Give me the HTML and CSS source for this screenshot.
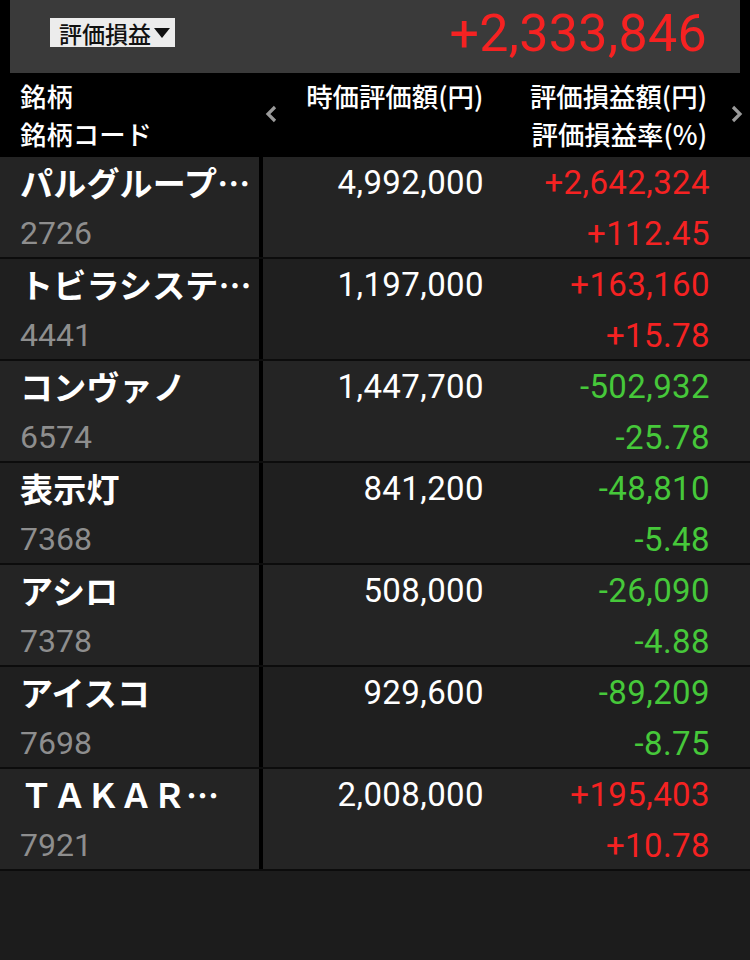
FILE: index.html
```html
<!DOCTYPE html>
<html lang="ja">
<head>
    <meta charset="UTF-8">
    <meta name="viewport" content="width=device-width, initial-scale=1.0">
    <title>評価損益</title>
    <link rel="stylesheet" href="styles.css">
</head>
<body>
    <div class="summary">
        <div class="picker">評価損益<span class="caret"></span></div>
        <div class="total up">+2,333,846</div>
    </div>

    <div class="head">
        <div class="col-name">
            <div>銘柄</div>
            <div>銘柄コード</div>
        </div>
        <div class="arrow">
            <svg width="14" height="20" viewBox="0 0 14 20"><path d="M11 3 L4 10 L11 17" fill="none" stroke="#9a9a9a" stroke-width="3.2"/></svg>
        </div>
        <div class="col-value">
            <div>時価評価額(円)</div>
        </div>
        <div class="col-pl">
            <div>評価損益額(円)</div>
            <div>評価損益率(%)</div>
        </div>
        <div class="arrow arrow-right">
            <svg width="14" height="20" viewBox="0 0 14 20"><path d="M3 3 L10 10 L3 17" fill="none" stroke="#9a9a9a" stroke-width="3.2"/></svg>
        </div>
    </div>

    <div class="rows">
        <div class="row">
            <div class="col-name"><div class="name">パルグループ…</div><div class="code">2726</div></div>
            <div class="col-value"><div>4,992,000</div></div>
            <div class="col-pl up"><div>+2,642,324</div><div>+112.45</div></div>
        </div>
        <div class="row">
            <div class="col-name"><div class="name">トビラシステ…</div><div class="code">4441</div></div>
            <div class="col-value"><div>1,197,000</div></div>
            <div class="col-pl up"><div>+163,160</div><div>+15.78</div></div>
        </div>
        <div class="row">
            <div class="col-name"><div class="name">コンヴァノ</div><div class="code">6574</div></div>
            <div class="col-value"><div>1,447,700</div></div>
            <div class="col-pl down"><div>-502,932</div><div>-25.78</div></div>
        </div>
        <div class="row">
            <div class="col-name"><div class="name">表示灯</div><div class="code">7368</div></div>
            <div class="col-value"><div>841,200</div></div>
            <div class="col-pl down"><div>-48,810</div><div>-5.48</div></div>
        </div>
        <div class="row">
            <div class="col-name"><div class="name">アシロ</div><div class="code">7378</div></div>
            <div class="col-value"><div>508,000</div></div>
            <div class="col-pl down"><div>-26,090</div><div>-4.88</div></div>
        </div>
        <div class="row">
            <div class="col-name"><div class="name">アイスコ</div><div class="code">7698</div></div>
            <div class="col-value"><div>929,600</div></div>
            <div class="col-pl down"><div>-89,209</div><div>-8.75</div></div>
        </div>
        <div class="row">
            <div class="col-name"><div class="name">ＴＡＫＡＲ…</div><div class="code">7921</div></div>
            <div class="col-value"><div>2,008,000</div></div>
            <div class="col-pl up"><div>+195,403</div><div>+10.78</div></div>
        </div>
    </div>
</body>
</html>
```

FILE: styles.css
```css
body {
    margin: 0;
    height: 960px;
    background-color: #1c1c1c;
    color: #fff;
    font-family: Roboto, "Noto Sans CJK JP", sans-serif;
    overflow: hidden;
}
.up {
    color: #f52222;
}
.down {
    color: #46c83a;
}

/* summary bar */
.summary {
    display: flex;
    align-items: flex-start;
    justify-content: space-between;
    height: 73px;
    box-sizing: border-box;
    border-left: 10px solid #000;
    border-right: 10px solid #000;
    background: #3a3a3a;
    padding: 18px 33px 0 40px;
}
.picker {
    display: flex;
    align-items: center;
    height: 29px;
    padding: 0 5px 0 9px;
    background: #ececec;
    color: #111;
    font-family: "Noto Sans CJK JP", sans-serif;
    font-size: 23px;
    font-weight: 500;
}
.caret {
    width: 0;
    height: 0;
    margin-left: 3px;
    border-left: 8px solid transparent;
    border-right: 8px solid transparent;
    border-top: 10px solid #111;
}
.total {
    font-size: 52px;
    line-height: 40px;
    margin-top: -4px;
    letter-spacing: 0.3px;
}

/* table header */
.head {
    display: flex;
    height: 84px;
    background: #000;
    font-family: "Noto Sans CJK JP", sans-serif;
    font-size: 26.4px;
    font-weight: 500;
    line-height: 38px;
    box-sizing: border-box;
    padding-top: 4px;
}
.head .col-name {
    width: 259px;
    padding-left: 20px;
    box-sizing: border-box;
}
.arrow {
    display: flex;
    align-items: center;
    width: 20px;
    margin-left: 5px;
    margin-top: -6px;
}
.head .col-value {
    width: 200px;
    text-align: right;
}
.head .col-pl {
    width: 224px;
    text-align: right;
}
.arrow-right {
    margin-left: 23px;
}

/* rows */
.row {
    display: flex;
    height: 102px;
    box-sizing: border-box;
    border-bottom: 2px solid #0c0c0c;
    font-size: 33px;
    line-height: 51px;
    letter-spacing: 0.4px;
}
.row:nth-child(odd) {
    background: #242424;
}
.row:nth-child(even) {
    background: #1f1f1f;
}
.row .col-name {
    width: 263px;
    box-sizing: border-box;
    padding-left: 20px;
    border-right: 4px solid #000;
    white-space: nowrap;
    overflow: hidden;
}
.name {
    font-family: "Noto Sans CJK JP", sans-serif;
    font-size: 33px;
    font-weight: 700;
    letter-spacing: 0.2px;
}
.code {
    color: #8e8e8e;
    font-size: 32px;
    letter-spacing: 0;
}
.row .col-value {
    width: 221px;
    text-align: right;
}
.row .col-pl {
    width: 226px;
    text-align: right;
}
```
